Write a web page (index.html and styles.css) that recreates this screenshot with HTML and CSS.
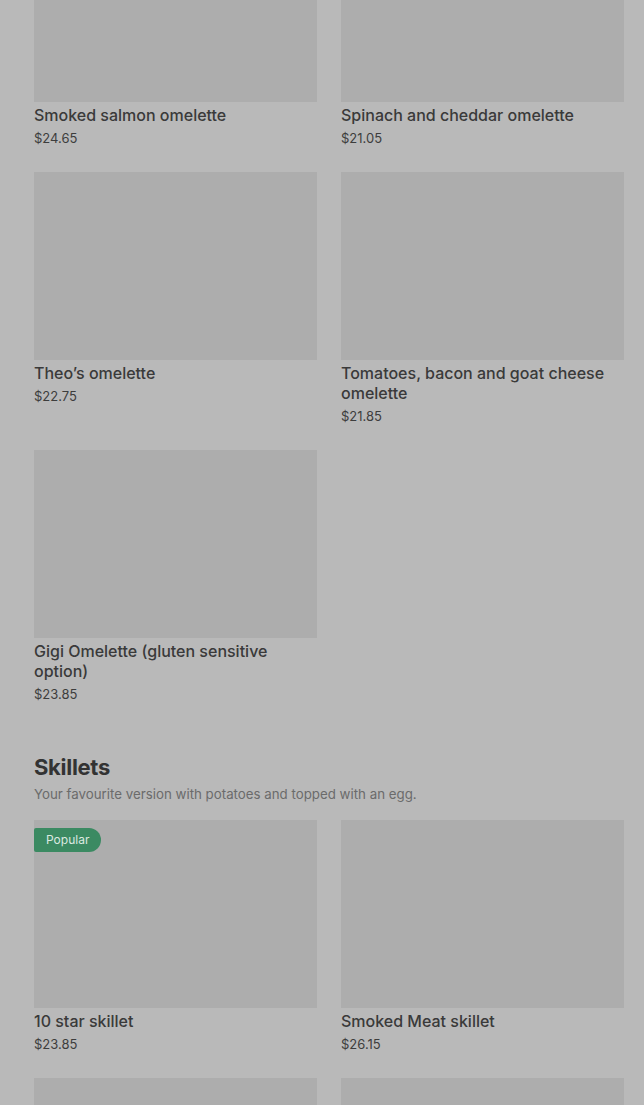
FILE: index.html
```html
<!DOCTYPE html>
<html>
<head>
<meta charset="utf-8">
<link rel="stylesheet" href="styles.css">
</head>
<body>
<div class="page">
  <section class="section section-first">
    <div class="grid">
      <div class="card"><div class="img"></div><div class="title">Smoked salmon omelette</div><div class="price">$24.65</div></div>
      <div class="card"><div class="img"></div><div class="title">Spinach and cheddar omelette</div><div class="price">$21.05</div></div>
      <div class="card"><div class="img"></div><div class="title">Theo’s omelette</div><div class="price">$22.75</div></div>
      <div class="card"><div class="img"></div><div class="title">Tomatoes, bacon and goat cheese omelette</div><div class="price">$21.85</div></div>
      <div class="card"><div class="img"></div><div class="title">Gigi Omelette (gluten sensitive option)</div><div class="price">$23.85</div></div>
    </div>
  </section>
  <section class="section">
    <h2 class="heading">Skillets</h2>
    <p class="desc">Your favourite version with potatoes and topped with an egg.</p>
    <div class="grid">
      <div class="card"><div class="img"><span class="badge">Popular</span></div><div class="title">10 star skillet</div><div class="price">$23.85</div></div>
      <div class="card"><div class="img"></div><div class="title">Smoked Meat skillet</div><div class="price">$26.15</div></div>
      <div class="card"><div class="img"></div></div>
      <div class="card"><div class="img"></div></div>
    </div>
  </section>
</div>
</body>
</html>
```

FILE: styles.css
```css
html, body {
  margin: 0;
  padding: 0;
  background: #b9b9b9;
  overflow: hidden;
}
body {
  font-family: Inter, "Noto Sans", sans-serif;
  color: #383838;
}
.page {
  padding: 0 20px 0 34px;
  height: 1105px;
  overflow: hidden;
}
.section-first {
  margin-top: -86px;
}
.grid {
  display: grid;
  grid-template-columns: 1fr 1fr;
  column-gap: 24px;
  row-gap: 24px;
}
.card {
  display: flex;
  flex-direction: column;
}
.img {
  position: relative;
  height: 188px;
  background: #adadad;
}
.title {
  margin-top: 3px;
  font-size: 16px;
  line-height: 20px;
  font-weight: 500;
  color: #3a3a3a;
}
.price {
  margin-top: 3px;
  font-size: 13px;
  line-height: 20px;
  color: #3d3d3d;
}
.heading {
  margin: 49px 0 0;
  font-size: 22px;
  line-height: 28px;
  font-weight: 700;
  color: #333333;
  letter-spacing: -0.3px;
}
.desc {
  margin: 3px 0 16px;
  font-size: 13.3px;
  line-height: 20px;
  color: #6b6b6b;
}
.badge {
  position: absolute;
  left: 0;
  top: 8px;
  height: 24px;
  line-height: 24px;
  padding: 0 12px;
  font-size: 12px;
  color: #dbe9e0;
  background: #3b8a62;
  border-radius: 2px 12px 12px 2px;
}
```
